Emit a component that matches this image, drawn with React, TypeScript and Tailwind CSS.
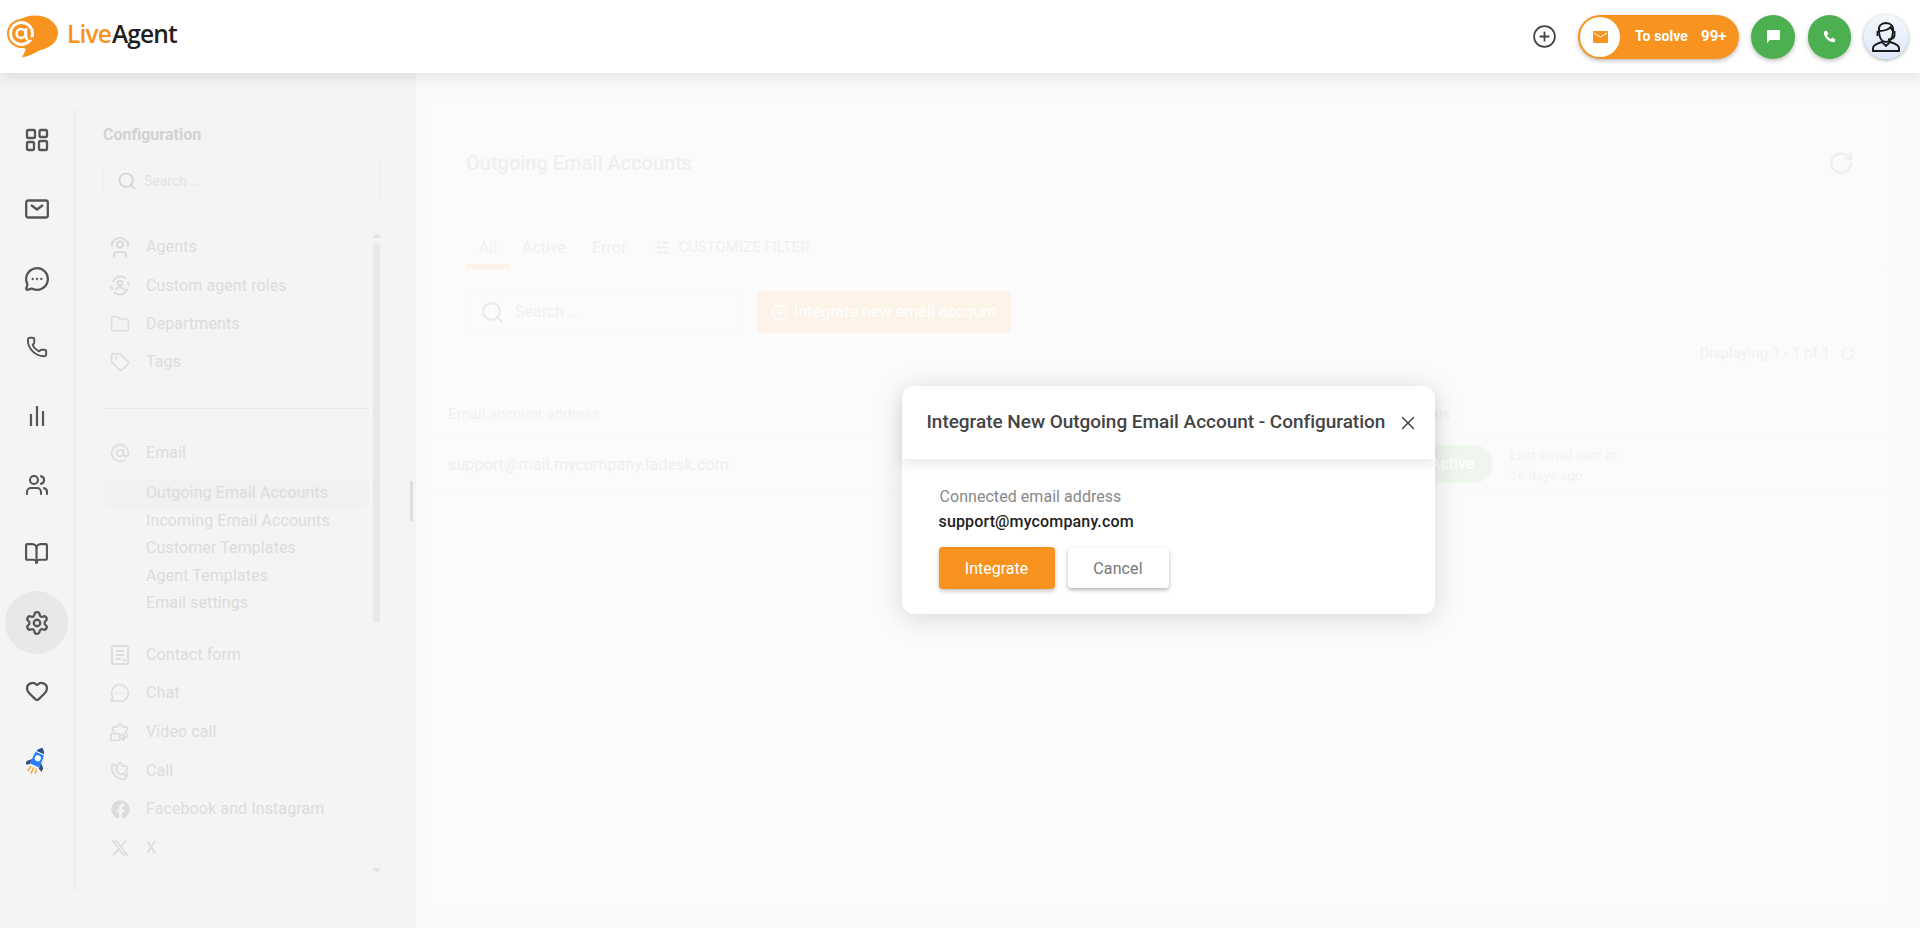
import type { ReactNode } from 'react';
import {
  BookOpen,
  CirclePlus,
  Folder,
  Heart,
  MessageCircleMore,
  Phone,
  RotateCw,
  Search,
  Settings,
  SlidersHorizontal,
  Tag,
  AtSign,
  Users,
  X,
} from 'lucide-react';
import { FaFacebook } from 'react-icons/fa';
import { RiTwitterXLine } from 'react-icons/ri';

const gearPath =
  'M9.671 4.136a2.34 2.34 0 0 1 4.659 0 2.34 2.34 0 0 0 3.319 1.915 2.34 2.34 0 0 1 2.33 4.033 2.34 2.34 0 0 0 0 3.831 2.34 2.34 0 0 1-2.33 4.033 2.34 2.34 0 0 0-3.319 1.915 2.34 2.34 0 0 1-4.659 0 2.34 2.34 0 0 0-3.32-1.915 2.34 2.34 0 0 1-2.33-4.033 2.34 2.34 0 0 0 0-3.831A2.34 2.34 0 0 1 6.35 6.051a2.34 2.34 0 0 0 3.319-1.915';

const Logo = () => (
  <div className="flex items-center gap-[7px]">
    <svg width="54" height="44" viewBox="0 0 54 44">
      <ellipse cx="29" cy="18" rx="23" ry="17.5" fill="#f7931e" />
      <path d="M22 30 L16 42.500 C24 41 32 37 38 32 Z" fill="#f7931e" />
      <circle cx="15.500" cy="18.500" r="14.500" fill="#f7931e" />
      <circle cx="15.500" cy="18.500" r="11" fill="none" stroke="#fff" strokeWidth="3" />
      <circle cx="15" cy="18.500" r="4.500" fill="none" stroke="#fff" strokeWidth="2.600" />
      <path d="M20 13 V22 Q20.500 25 24 25" fill="none" stroke="#fff" strokeWidth="2.600" />
      <path d="M22 23.500 L30 23.500" stroke="#f7931e" strokeWidth="2.500" />
    </svg>
    <span className="-translate-y-[2px] font-['Open_Sans',sans-serif] text-[24.5px] font-semibold tracking-[-0.85px] leading-none">
      <span className="mr-[1px] text-[#f7931e]">Live</span>
      <span className="text-[#231f20]">Agent</span>
    </span>
  </div>
);

const GridIcon = () => (
  <svg width="24" height="24" viewBox="0 0 24 24" fill="none" stroke="#555" strokeWidth="2.300">
    <rect x="2" y="2" width="8" height="8" rx="1.500" />
    <rect x="14.500" y="2" width="7.500" height="7" rx="1.500" />
    <rect x="2" y="14" width="7" height="8" rx="1.500" />
    <rect x="14" y="13" width="8" height="9" rx="1.500" />
  </svg>
);

const MailIcon = () => (
  <svg width="24" height="20" viewBox="0 0 24 20" fill="none" stroke="#555" strokeWidth="2.300">
    <rect x="1.200" y="1.500" width="21.600" height="17" rx="2" />
    <path d="M6 6 L12 10.500 L18 6" />
  </svg>
);

const BarsIcon = () => (
  <svg width="16" height="22" viewBox="0 0 16 22" fill="none" stroke="#555" strokeWidth="2.200">
    <path d="M2 9 V21 M8 1 V21 M14 6 V21" />
  </svg>
);

const RocketIcon = () => (
  <svg width="22" height="30" viewBox="0 0 22 30">
    <g transform="rotate(24 11 14)">
      <path d="M11 1 C15 4 16 8 16 12 L16 20 L6 20 L6 12 C6 8 7 4 11 1 Z" fill="#2a7fff" />
      <path d="M11 1 C13 2.500 14.500 4 15 6 L7 6 C7.500 4 9 2.500 11 1 Z" fill="#2f4f85" />
      <path d="M7 6.500 H15" stroke="#fff" strokeWidth="1" />
      <circle cx="11" cy="12" r="3" fill="#fff" />
      <path d="M6 15 L2 19 L2 23 L6 21 Z M16 15 L20 19 L20 23 L16 21 Z" fill="#2f4f85" />
      <path d="M8 22 L7 28 M11 22 L11 29 M14 22 L15 27" stroke="#f7a01e" strokeWidth="1.300" />
    </g>
  </svg>
);

const AgentsIcon = () => (
  <svg width="20" height="21" viewBox="0 0 20 21" fill="none" stroke="#dcdcdc" strokeWidth="2">
    <circle cx="10" cy="7.500" r="3" />
    <path d="M2 10 V7.500 A8 6.500 0 0 1 18 7.500 V10" />
    <path d="M4 20.500 V17.500 A3 3 0 0 1 7 15 H13 A3 3 0 0 1 16 17.500 V20.500" />
  </svg>
);

const RolesIcon = () => (
  <svg width="21" height="21" viewBox="0 0 21 21" fill="none" stroke="#dcdcdc" strokeWidth="2">
    <circle cx="10.500" cy="8" r="2.500" />
    <path d="M6 15.500 A4.500 3 0 0 1 15 15.500" />
    <path d="M3 7 A8.500 8.500 0 0 1 17 3.500 M18 14 A8.500 8.500 0 0 1 4 17.500 M1.200 10.500 A9.500 9.500 0 0 0 2.500 15 M19.800 10.500 A9.500 9.500 0 0 0 18.500 6" />
  </svg>
);

const FormIcon = () => (
  <svg width="18" height="20" viewBox="0 0 18 20" fill="none" stroke="#dcdcdc" strokeWidth="2">
    <rect x="1" y="1" width="16" height="18" rx="1.500" />
    <path d="M5 6 H13 M5 10 H13 M5 14 H10" />
    <circle cx="13.500" cy="15" r="0.600" />
  </svg>
);

const VideoCogIcon = () => (
  <svg width="22" height="22" viewBox="0 0 24 24" fill="none" stroke="#dcdcdc" strokeWidth="2.100">
    <path d={gearPath} />
    <rect x="0" y="12" width="15" height="12" fill="#f4f4f4" stroke="none" />
    <rect x="1" y="14" width="10.500" height="8" rx="1.500" />
    <path d="M11.500 17 L16.500 14.500 V21.500 L11.500 19" />
  </svg>
);

const CallCogIcon = () => (
  <svg width="22" height="22" viewBox="0 0 24 24" fill="none" stroke="#dcdcdc" strokeWidth="2.100">
    <path d={gearPath} />
    <path d="M0 4 H6 L20 19 V24 H0 Z" fill="#f4f4f4" stroke="none" />
    <path d="M2 6 L5 3.500 L9 8 L7.500 10 A10 10 0 0 0 14 16.500 L16 15 L20 19 L17.500 22 A15 15 0 0 1 2 6 Z" />
  </svg>
);

const AvatarIcon = () => (
  <svg width="28" height="30" viewBox="0 0 28 30" fill="none" stroke="#1a1a1a" strokeWidth="1.900">
    <path d="M7 10 C6 4 9 1 14 1 C19 1 22 4 21 10 C20.500 16 18 20 14 20 C10 20 7.500 16 7 10 Z" />
    <path d="M7 9 C11 9 16 8 18.500 5 C19.500 7 20.500 8.500 21 9" />
    <path d="M5.500 9 V14 M22.500 9 V13 C22.500 16 20 17.500 16 17.500" />
    <path d="M1 29 V26 C1 23 5 21.500 10 20 L14 24 L18 20 C23 21.500 27 23 27 26 V29 Z" />
  </svg>
);

const railItems: { icon: ReactNode; active?: boolean }[] = [
  { icon: <GridIcon /> },
  { icon: <MailIcon /> },
  { icon: <MessageCircleMore size={26} color="#555" strokeWidth={2.100} className="translate-y-[1px]" /> },
  { icon: <Phone size={22} color="#555" strokeWidth={2.100} /> },
  { icon: <BarsIcon /> },
  { icon: <Users size={24} color="#555" strokeWidth={2.100} /> },
  { icon: <BookOpen size={25} color="#555" strokeWidth={2.100} /> },
  { icon: <Settings size={26} color="#555" strokeWidth={2.100} />, active: true },
  { icon: <Heart size={24} color="#555" strokeWidth={2.300} className="-translate-y-[1px]" /> },
  { icon: <RocketIcon /> },
];

const topItems = [
  { icon: <AgentsIcon />, label: 'Agents' },
  { icon: <RolesIcon />, label: 'Custom agent roles' },
  { icon: <Folder size={22} color="#dcdcdc" strokeWidth={1.900} />, label: 'Departments' },
  { icon: <Tag size={22} color="#dcdcdc" strokeWidth={1.900} />, label: 'Tags' },
];

const emailItems = [
  'Outgoing Email Accounts',
  'Incoming Email Accounts',
  'Customer Templates',
  'Agent Templates',
  'Email settings',
];

const bottomItems = [
  { icon: <FormIcon />, label: 'Contact form' },
  { icon: <MessageCircleMore size={24} color="#dcdcdc" strokeWidth={1.900} />, label: 'Chat' },
  { icon: <VideoCogIcon />, label: 'Video call' },
  { icon: <CallCogIcon />, label: 'Call' },
  { icon: <FaFacebook size={19} color="#dcdcdc" />, label: 'Facebook and Instagram' },
  { icon: <RiTwitterXLine size={20} color="#dcdcdc" />, label: 'X' },
  { icon: <AtSign size={20} color="#dcdcdc" strokeWidth={1.700} />, label: '' },
];

const MenuRow = ({ icon, label }: { icon: ReactNode; label: string }) => (
  <div className="flex h-[38.7px] items-center gap-[16px] pl-[7px] text-[16px] tracking-[0.1px] text-[#dcdcdc]">
    <span className="flex w-[20px] justify-center">{icon}</span>
    <span>{label}</span>
  </div>
);

const Header = () => (
  <header className="relative z-10 flex h-[73px] shrink-0 items-center justify-between bg-white pl-[6px] pr-[12px] shadow-[0_4px_16px_rgba(0,0,0,0.1)]">
    <Logo />
    <div className="flex items-center">
      <CirclePlus size={25} color="#444" strokeWidth={1.700} />
      <div className="ml-[21px] flex h-[44px] w-[161px] items-center rounded-full bg-[#f7931e] pl-[2px] text-[14px] font-bold text-white shadow-[0_2px_4px_rgba(0,0,0,0.25)]">
        <div className="flex h-[40px] w-[40px] items-center justify-center rounded-full bg-white">
          <svg width="15" height="12" viewBox="0 0 15 12">
            <path d="M0 1 Q0 0 1 0 H14 Q15 0 15 1 V11 Q15 12 14 12 H1 Q0 12 0 11 Z" fill="#f7931e" />
            <path d="M1 2 L7.500 6 L14 2" fill="none" stroke="#fff" strokeWidth="1" />
          </svg>
        </div>
        <span className="ml-[15px] tracking-[0.1px]">To solve</span>
        <span className="ml-[13px] text-[15px]">99+</span>
      </div>
      <div className="ml-[12px] flex h-[44px] w-[44px] items-center justify-center rounded-full bg-[#4caf50] shadow-[0_2px_4px_rgba(0,0,0,0.25)]">
        <svg width="13" height="13" viewBox="0 0 13 13">
          <path d="M1 0 H12 Q13 0 13 1 V9 Q13 10 12 10 H3 L0 13 V1 Q0 0 1 0 Z" fill="#fff" />
        </svg>
      </div>
      <div className="ml-[13px] flex h-[44px] w-[43px] items-center justify-center rounded-full bg-[#4caf50] shadow-[0_2px_4px_rgba(0,0,0,0.25)]">
        <svg width="13" height="13" viewBox="0 0 24 24">
          <path d="M6.600 1 L10 7 L7.500 9.500 C9 13 11 15 14.500 16.500 L17 14 L23 17.400 L21 22.500 C11 23 1 13 1.500 3 Z" fill="#fff" />
        </svg>
      </div>
      <div className="ml-[13px] flex h-[44px] w-[44px] items-center justify-center rounded-full bg-gradient-to-b from-[#f6f8fb] to-[#dbe8fb] shadow-[0_1px_4px_rgba(0,0,0,0.35)]">
        <AvatarIcon />
      </div>
    </div>
  </header>
);

const Sidebar = () => (
  <aside className="flex w-[416px] shrink-0 bg-[#f4f4f4]">
    <nav className="flex w-[73px] shrink-0 flex-col items-center pt-[32px]">
      {railItems.map((item, index) => (
        <div key={index} className="flex h-[69px] items-center justify-center">
          <div className={`flex h-[63px] w-[63px] items-center justify-center rounded-full ${item.active ? 'bg-[#e8e8e8]' : ''}`}>
            {item.icon}
          </div>
        </div>
      ))}
    </nav>
    <div className="mt-[37px] h-[780px] w-[308px] border-l-[4px] border-[#efefef] pl-[26px]">
      <h2 className="mt-[15px] text-[16px] leading-[20px] font-bold text-[#d2d2d2]">Configuration</h2>
      <div className="mt-[14px] flex h-[43px] w-[278px] items-center gap-[7px] rounded-[4px] border border-[#f0f0f0] pl-[13px] pt-[1px] text-[14px] text-[#e2e2e2]">
        <Search size={20} color="#d4d4d4" strokeWidth={2} />
        <span>Search ...</span>
      </div>
      <div className="mt-[26px] flex h-[650px] w-[278px] justify-between overflow-hidden">
        <div className="w-[266px]">
          <div className="flex flex-col gap-[0px] [&>div]:h-[38.4px]">
            {topItems.map((item) => (
              <MenuRow key={item.label} icon={item.icon} label={item.label} />
            ))}
          </div>
          <div className="mt-[26px] border-t border-[#ebebeb]" />
          <div className="mt-[25px]">
            <MenuRow icon={<AtSign size={22} color="#dcdcdc" strokeWidth={1.900} />} label="Email" />
          </div>
          <div className="mt-[7px]">
            {emailItems.map((label, index) => (
              <div
                key={label}
                className={`flex h-[27.6px] items-center rounded-lg pl-[43px] text-[16px] tracking-[0.1px] text-[#dcdcdc] ${index === 0 ? 'bg-[#f1f1f1]' : ''}`}
              >
                {label}
              </div>
            ))}
          </div>
          <div className="mt-[18px]">
            {bottomItems.map((item) => (
              <MenuRow key={item.label} icon={item.icon} label={item.label} />
            ))}
          </div>
        </div>
        <div className="flex h-full w-[9px] flex-col items-center bg-[#f3f3f3]">
          <div className="mt-[5px] h-0 w-0 border-x-[4px] border-b-[5px] border-x-transparent border-b-[#e4e4e4]" />
          <div className="mt-[5px] h-[379px] w-[7px] rounded-full bg-[#e8e8e8]" />
          <div className="mt-auto mb-[5px] h-0 w-0 border-x-[4px] border-t-[5px] border-x-transparent border-t-[#e4e4e4]" />
        </div>
      </div>
    </div>
    <div className="relative">
      <div className="absolute left-[29px] top-[408px] h-[40px] w-[3px] bg-[#dedede]" />
    </div>
  </aside>
);

const Modal = () => (
  <div className="absolute inset-0 flex justify-center pt-[313px]">
    <div className="h-[228px] w-[533px] rounded-xl bg-white shadow-[0_4px_28px_rgba(0,0,0,0.14)]">
      <div className="flex h-[73px] items-center justify-between rounded-t-xl bg-white pl-[25px] pr-[16px] shadow-[0_6px_12px_rgba(0,0,0,0.08)]">
        <h3 className="text-[19px] font-medium tracking-[-0.03px] text-[#444]">Integrate New Outgoing Email Account - Configuration</h3>
        <X size={22} color="#444" strokeWidth={1.600} />
      </div>
      <div className="pl-[37px] pt-[28px]">
        <p className="pl-[1px] text-[16px] leading-[20px] tracking-[0.05px] text-[#888]">Connected email address</p>
        <p className="mt-[5px] text-[16px] leading-[20px] font-medium tracking-[0.15px] text-[#222]">support@mycompany.com</p>
        <div className="mt-[15px] flex items-center gap-[13px]">
          <button className="h-[42px] w-[116px] rounded-[4px] bg-[#f7931e] pt-[1px] text-[16px] text-white shadow-[0_2px_4px_rgba(0,0,0,0.25)]">
            Integrate
          </button>
          <button className="h-[40px] w-[101px] rounded-[4px] bg-white pt-[1px] text-[16px] tracking-[0.1px] text-[#777] shadow-[0_2px_4px_rgba(0,0,0,0.3)]">
            Cancel
          </button>
        </div>
      </div>
    </div>
  </div>
);

const Main = () => (
  <main className="relative flex-1 bg-[#fafafa]">
    <div className="ml-[11px] mr-[27px] mt-[27px] h-[805px] rounded-lg bg-[#fbfbfb]">
      <div className="h-[172px] rounded-b-lg bg-[#fbfbfb] shadow-[0_8px_10px_rgba(0,0,0,0.004)]">
        <div className="flex h-[40px] translate-y-[43px] items-center justify-between pl-[39px] pr-[39px]">
          <h1 className="text-[20px] font-medium text-[#efefef]">Outgoing Email Accounts</h1>
          <RotateCw size={26} color="#efefef" strokeWidth={2.200} />
        </div>
        <div className="ml-[39px] mt-[86px] flex h-[43px] items-center text-[16px] text-[#f0f0f0]">
          <span className="flex h-full w-[44px] items-center justify-center border-b-[5px] border-[#fdf2e6] pt-[5px]">All</span>
          <span className="ml-[12px]">Active</span>
          <span className="ml-[26px]">Error</span>
          <SlidersHorizontal size={17} color="#ededed" className="ml-[28px]" />
          <span className="ml-[7px] text-[15px]">CUSTOMIZE FILTER</span>
        </div>
      </div>
      <div className="ml-[39px] mt-[19px] flex items-center gap-[19px]">
        <div className="flex h-[42px] w-[272px] items-center gap-[10px] rounded-[4px] border border-[#f9f9f9] pl-[13px] text-[16px] text-[#f0f0f0]">
          <Search size={25} color="#eaeaea" strokeWidth={2} />
          <span>Search ...</span>
        </div>
        <div className="flex h-[42px] w-[254px] items-center gap-[6px] rounded-[4px] bg-[#fdf3e9] pl-[14px] text-[16px] tracking-[0.05px] text-white">
          <CirclePlus size={17} color="#fff" strokeWidth={1.800} />
          <span>Integrate new email account</span>
        </div>
      </div>
      <div className="mt-[10px] flex h-[20px] items-center justify-end gap-[10px] pr-[38px] text-[15px] text-[#f0f0f0]">
        <span>Displaying 1 - 1 of 1</span>
        <RotateCw size={15} color="#efefef" strokeWidth={2} />
      </div>
      <div className="mt-[30px] flex h-[43px] items-center border-b border-[#fafafa] pl-[21px] pt-[1px] text-[15px] text-[#f1f1f1]">
        <span className="w-[959px]">Email account address</span>
        <span>Status</span>
      </div>
      <div className="flex h-[57px] items-center border-b border-[#fafafa] pl-[21px]">
        <span className="w-[959px] pt-[1px] text-[16px] tracking-[0.12px] text-[#efefef]">support@mail.mycompany.ladesk.com</span>
        <span className="flex h-[38px] w-[86px] items-center justify-center rounded-full bg-[#eef6ee] pl-[4px] text-[16px] font-medium text-white">Active</span>
        <div className="ml-[17px] pt-[1px] text-[13.5px] leading-[20px] text-[#f2f2f2]">
          <p>Last email sent at</p>
          <p>16 days ago</p>
        </div>
      </div>
    </div>
    <Modal />
  </main>
);

export default function App() {
  return (
    <div className="flex h-[928px] flex-col overflow-hidden bg-white font-['Roboto',sans-serif]">
      <Header />
      <div className="flex flex-1 overflow-hidden">
        <Sidebar />
        <Main />
      </div>
    </div>
  );
}
